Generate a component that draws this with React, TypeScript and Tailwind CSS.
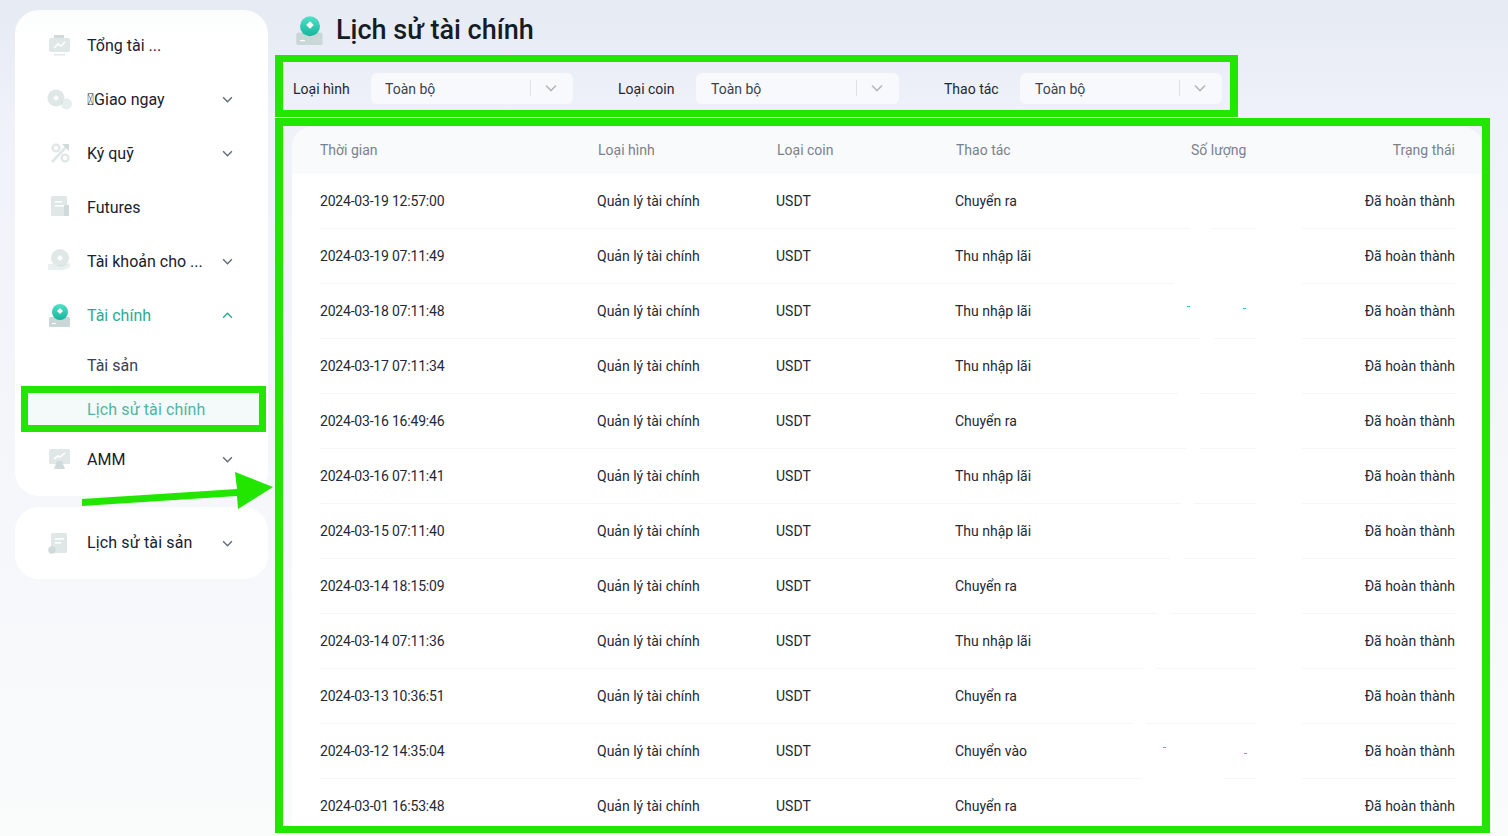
import React from "react";

const G1 = "#dfe7e7";
const G2 = "#cfdbda";

function Chevron({ up, cls }: { up?: boolean; cls: string }) {
  return (
    <svg viewBox="0 0 12 8" className={cls} fill="none" stroke="currentColor" strokeWidth="1.6">
      <polyline points={up ? "1,6.5 6,1.5 11,6.5" : "1,1.5 6,6.5 11,1.5"} />
    </svg>
  );
}

const Diamond = ({ x, y, r }: { x: number; y: number; r: number }) => (
  <path d={`M${x} ${y - r}L${x + r} ${y}L${x} ${y + r}L${x - r} ${y}Z`} fill="#fff" />
);

const icons: Record<string, React.ReactNode> = {
  overview: (
    <>
      <rect x="6" y="2" width="10" height="4" fill={G2} />
      <rect x="1" y="5" width="21" height="14" rx="2" fill={G1} />
      <polyline points="6,15 10,11 13,13 17,9" fill="none" stroke="#fff" strokeWidth="1.6" />
      <rect x="6" y="21" width="11" height="1.5" fill={G1} />
    </>
  ),
  spot: (
    <>
      <circle cx="8" cy="11" r="8.5" fill={G1} />
      <circle cx="18.5" cy="17" r="5.5" fill="#e7eeee" />
      <path d="M15 12.5 A5.5 5.5 0 0 0 13.5 18 A8.5 8.5 0 0 0 15 12.5Z" fill={G2} />
      <Diamond x={8} y={11} r={3} />
    </>
  ),
  margin: (
    <>
      <circle cx="8" cy="7" r="3.4" fill="none" stroke={G1} strokeWidth="2.4" />
      <circle cx="17" cy="17" r="3.4" fill="none" stroke={G1} strokeWidth="2.4" />
      <line x1="4" y1="21" x2="19" y2="5" stroke={G1} strokeWidth="2.6" />
      <path d="M14 3h7v7z" fill={G2} />
    </>
  ),
  futures: (
    <>
      <rect x="3" y="1" width="16" height="20" rx="1.5" fill={G1} />
      <rect x="7" y="6" width="7" height="1.6" fill="#fff" />
      <rect x="7" y="10" width="10" height="1.6" fill="#fff" />
      <rect x="16" y="10" width="5" height="11" fill={G2} />
    </>
  ),
  lending: (
    <>
      <circle cx="12" cy="9" r="9" fill={G1} />
      <path d="M0 15l8 0c5 2 9 1 14-1v4c-4 3-9 4-14 3h-8z" fill="#eaf0f0" />
      <path d="M6 15c5 2.5 10 2 14-1-3 4-9 5-14 1z" fill={G2} />
      <Diamond x={12} y={9} r={3} />
    </>
  ),
  finance: (
    <>
      <defs>
        <linearGradient id="fin" x1="0" y1="0" x2="0" y2="1">
          <stop offset="0" stopColor="#52e0c8" />
          <stop offset="1" stopColor="#16b49c" />
        </linearGradient>
      </defs>
      <rect x="1" y="14" width="21" height="10" rx="1.5" fill="#c9d7d6" />
      <circle cx="12" cy="9" r="8" fill="url(#fin)" />
      <Diamond x={12} y={8} r={3} />
      <rect x="4" y="20" width="4" height="1" fill="#fff" />
    </>
  ),
  amm: (
    <>
      <rect x="1" y="2" width="21" height="15" rx="1.5" fill={G1} />
      <polyline points="6,12 10,9 12,10 17,6" fill="none" stroke="#fff" strokeWidth="1.6" />
      <path d="M9 14h5l3 8h-11z" fill={G2} />
    </>
  ),
  history: (
    <>
      <rect x="3" y="2" width="16" height="20" rx="1.5" fill={G1} />
      <rect x="7" y="7" width="9" height="1.7" fill="#fff" />
      <rect x="7" y="11" width="6" height="1.7" fill="#fff" />
      <circle cx="4" cy="19" r="3.8" fill={G2} />
    </>
  ),
};

function Icon({ name, cls }: { name: string; cls: string }) {
  return (
    <svg viewBox="0 0 24 24" className={`${cls} overflow-visible shrink-0`}>
      {icons[name]}
    </svg>
  );
}

function MenuItem({
  icon,
  label,
  arrow = true,
  up,
  active,
}: {
  icon: string;
  label: string;
  arrow?: boolean;
  up?: boolean;
  active?: boolean;
}) {
  return (
    <div className="flex h-[54px] items-center pl-[33px] pr-[35px]">
      <Icon name={icon} cls="w-6 h-6" />
      <span
        className={`ml-[15px] flex-1 text-base ${icon === "history" ? "tracking-[0.14px]" : "pt-[2px]"} ${
          active ? "text-[#2ba996]" : "text-[#1b2130]"
        }`}
      >
        {label}
      </span>
      {arrow && <Chevron up={up} cls={`mt-px w-[11px] h-[7px] ${active ? "text-[#2ba996]" : "text-[#616b78]"}`} />}
    </div>
  );
}

function Filter({ label, gapCls, selectCls }: { label: string; gapCls: string; selectCls: string }) {
  return (
    <>
      <span className={`${gapCls} text-sm text-[#1f2533] whitespace-nowrap`}>{label}</span>
      <div className={`${selectCls} flex h-[31px] items-center rounded-md bg-[#f8f9fc] text-sm text-[#3b4250]`}>
        <span className="flex-1">Toàn bộ</span>
        <span className="-mt-[2px] h-[16px] w-px bg-[#dfe2e8]" />
        <Chevron cls="-mt-[2px] ml-[14px] mr-[16px] w-[12px] h-[8px] text-[#b4b9c2]" />
      </div>
    </>
  );
}

type Row = { t: string; op: string; gaps: [number, number][]; specks?: [number, number][] };
const rows: Row[] = [
  { t: "2024-03-19 12:57:00", op: "Chuyển ra", gaps: [[1190, 1211], [1257, 1302]] },
  { t: "2024-03-19 07:11:49", op: "Thu nhập lãi", gaps: [[1174, 1302]] },
  { t: "2024-03-18 07:11:48", op: "Thu nhập lãi", gaps: [[1201, 1214], [1257, 1302]], specks: [[1187, 306], [1243, 308]] },
  { t: "2024-03-17 07:11:34", op: "Thu nhập lãi", gaps: [[1178, 1201], [1257, 1302]] },
  { t: "2024-03-16 16:49:46", op: "Chuyển ra", gaps: [[1186, 1199], [1257, 1302]] },
  { t: "2024-03-16 07:11:41", op: "Thu nhập lãi", gaps: [[1181, 1194], [1257, 1302]] },
  { t: "2024-03-15 07:11:40", op: "Thu nhập lãi", gaps: [[1170, 1183], [1257, 1302]] },
  { t: "2024-03-14 18:15:09", op: "Chuyển ra", gaps: [[1157, 1170], [1257, 1302]] },
  { t: "2024-03-14 07:11:36", op: "Thu nhập lãi", gaps: [[1143, 1156], [1257, 1302]] },
  { t: "2024-03-13 10:36:51", op: "Chuyển ra", gaps: [[1133, 1146], [1257, 1302]] },
  { t: "2024-03-12 14:35:04", op: "Chuyển vào", gaps: [[1142, 1224], [1257, 1302]], specks: [[1163, 747], [1244, 753]] },
  { t: "2024-03-01 16:53:48", op: "Chuyển ra", gaps: [] },
];

export default function App() {
  return (
    <div
      className="relative flex h-[836px] w-[1508px] overflow-hidden bg-gradient-to-b from-[#e6eaf3] via-[#eff2f9] via-[15%] to-[#fafbfb] text-[#1b2130]"
      style={{ fontFamily: "Roboto, 'Noto Sans', sans-serif" }}
    >
      <aside className="ml-[15px] mt-[10px] flex w-[253px] shrink-0 flex-col gap-[11px]">
        <div className="rounded-[24px] bg-gradient-to-b from-[#fbfcfd] to-white to-[6%] pb-[10px] pt-2">
          <MenuItem icon="overview" label="Tổng tài ..." arrow={false} />
          <MenuItem icon="spot" label={"\u{F0000}Giao ngay"} />
          <MenuItem icon="margin" label="Ký quỹ" />
          <MenuItem icon="futures" label="Futures" arrow={false} />
          <MenuItem icon="lending" label="Tài khoản cho ..." />
          <MenuItem icon="finance" label="Tài chính" up active />
          <div className="flex h-[44px] items-center pl-[72px] pt-[4px] text-base text-[#3a4150]">Tài sản</div>
          <div className="ml-[6px] mr-[2px] h-[46px] border-[7px] border-[#23e600] bg-[#f3faf9]">
            <div className="flex h-full items-center pl-[59px] pt-[2px] text-base tracking-[0.12px] text-[#4fb5a5]">
              Lịch sử tài chính
            </div>
          </div>
          <MenuItem icon="amm" label="AMM" />
        </div>
        <div className="rounded-[24px] bg-white py-[9px]">
          <MenuItem icon="history" label="Lịch sử tài sản" />
        </div>
      </aside>

      <main className="ml-[7px] flex min-w-0 flex-1 flex-col">
        <div className="flex h-[55px] items-center pl-[20px] pt-[5px]">
          <Icon name="finance" cls="w-[30px] h-[30px]" />
          <h1 className="ml-[11px] text-[27px] font-medium leading-none text-[#171b26]">Lịch sử tài chính</h1>
        </div>
        <div className="flex h-[62px] w-[963px] items-center border-x-8 border-y-[7px] border-[#23e600] pt-[5px]">
          <Filter label="Loại hình" gapCls="ml-[10px] w-[78px]" selectCls="w-[202px] pl-[14px]" />
          <Filter label="Loại coin" gapCls="ml-[45px] w-[78px]" selectCls="w-[203px] pl-[15px]" />
          <Filter label="Thao tác" gapCls="ml-[45px] w-[76px]" selectCls="w-[202px] pl-[15px]" />
        </div>
        <div className="mt-px flex h-[715px] w-[1215px] flex-col border-x-8 border-b-[7px] border-t-8 border-[#23e600] pl-[9px]">
          <div className="mt-px min-h-0 flex-1 overflow-hidden rounded-t-[20px] bg-white">
            <div className="flex h-[47px] items-center bg-[#f9fafc] pb-[2px] pl-[28px] pr-[27px] text-sm text-[#7b818c]">
              <span className="w-[278px] shrink-0">Thời gian</span>
              <span className="w-[179px] shrink-0">Loại hình</span>
              <span className="w-[179px] shrink-0">Loại coin</span>
              <span className="w-[235px] shrink-0">Thao tác</span>
              <span className="w-[55px] shrink-0 whitespace-nowrap">Số lượng</span>
              <span className="flex-1 text-right">Trạng thái</span>
            </div>
            <div className="pl-[28px] pr-[27px]">
              {rows.map((r, i) => (
                <div
                  key={r.t}
                  className={`relative flex h-[55px] items-center border-b text-sm text-[#232937] ${
                    i === rows.length - 1 ? "border-transparent" : "border-[#f5f6f8]"
                  }`}
                >
                  <span className="w-[277px] shrink-0 tracking-[-0.2px]">{r.t}</span>
                  <span className="w-[179px] shrink-0">Quản lý tài chính</span>
                  <span className="w-[179px] shrink-0">USDT</span>
                  <span className="w-[290px] shrink-0">{r.op}</span>
                  <span className="flex-1 text-right">Đã hoàn thành</span>
                  {r.gaps.map(([a, b]) => (
                    <span
                      key={a}
                      className="absolute bottom-[-1px] h-px bg-white"
                      style={{ left: a - 320, width: b - a }}
                    />
                  ))}
                  {r.specks?.map(([x, y]) => (
                    <span
                      key={x}
                      className="absolute h-px w-[3px] bg-[#3cc7b0]"
                      style={{ left: x - 320, top: y - (174 + i * 55) }}
                    />
                  ))}
                </div>
              ))}
            </div>
          </div>
        </div>
      </main>

      <svg viewBox="0 0 1508 836" className="pointer-events-none absolute inset-0 h-[836px] w-[1508px]">
        <polygon points="82,499 237,489 235,472 273,487 238,509 237,496 82,506" fill="#23e600" />
      </svg>
    </div>
  );
}
